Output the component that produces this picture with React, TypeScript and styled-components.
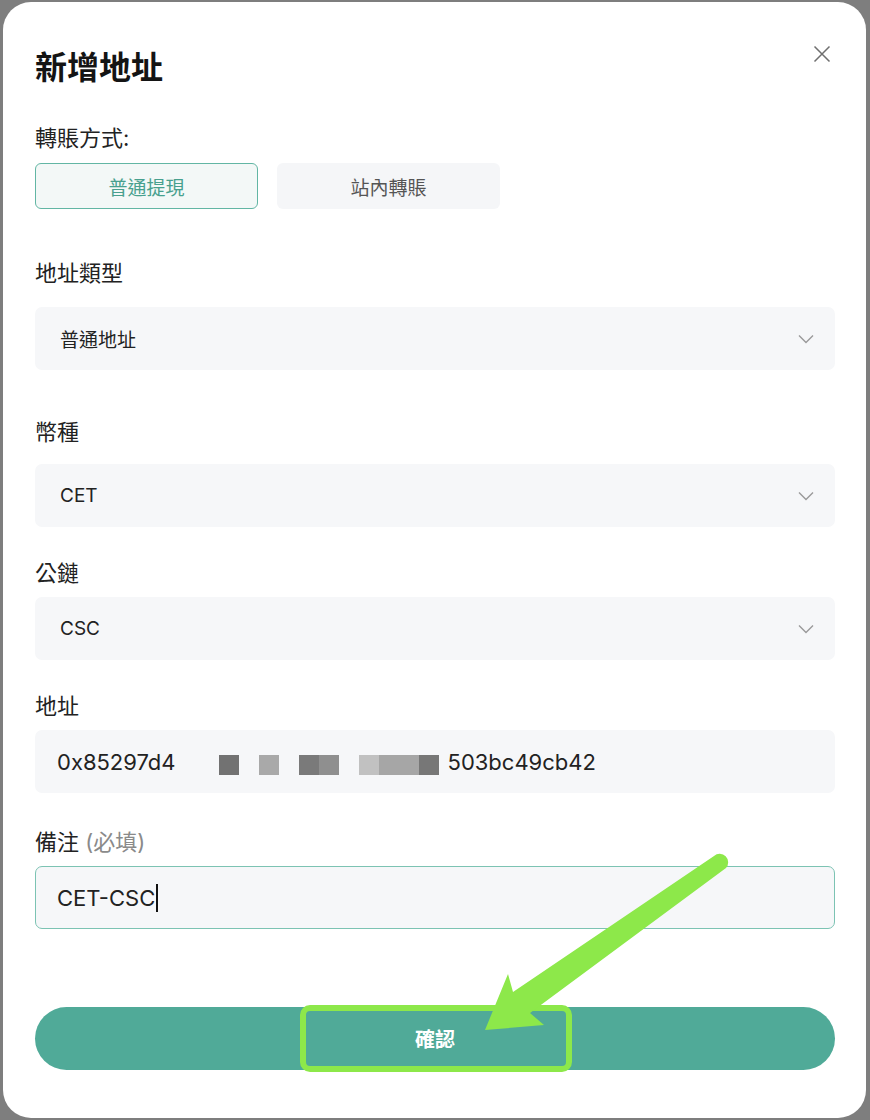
import React from 'react';
import styled, { createGlobalStyle } from 'styled-components';

const GlobalStyle = createGlobalStyle`
  html, body {
    margin: 0;
    padding: 0;
    background: #7e7e7e;
  }
  body {
    font-family: Inter, "Noto Sans CJK TC", sans-serif;
  }
`;

const Page = styled.div`
  position: relative;
  width: 870px;
  height: 1120px;
  padding: 2px 4px 2px 3px;
  box-sizing: border-box;
  background: #7e7e7e;
`;

const Modal = styled.div`
  position: relative;
  height: 100%;
  background: #fff;
  border-radius: 28px;
  padding: 46px 31px 0 32px;
  box-sizing: border-box;
  display: flex;
  flex-direction: column;
`;

const Title = styled.h1`
  margin: 0;
  font-size: 32px;
  line-height: 40px;
  font-weight: 700;
  color: #141414;
`;

const Close = styled.button`
  position: absolute;
  top: 43px;
  right: 35px;
  width: 18px;
  height: 18px;
  padding: 0;
  border: none;
  background: none;
  display: flex;
  align-items: center;
  justify-content: center;
`;

const Label = styled.div<{ $top: number; $gap: number }>`
  margin-top: ${p => p.$top}px;
  margin-bottom: ${p => p.$gap}px;
  font-size: 22px;
  line-height: 30px;
  color: #222;

  span {
    color: #8a8a8a;
  }
`;

const Tabs = styled.div`
  display: flex;
  gap: 19px;
`;

const Tab = styled.div<{ $active?: boolean }>`
  width: 223px;
  height: 46px;
  box-sizing: border-box;
  border-radius: 6px;
  display: flex;
  align-items: center;
  justify-content: center;
  font-size: 19px;
  border: 1px solid ${p => (p.$active ? '#62b6a4' : 'transparent')};
  background: ${p => (p.$active ? '#f3f8f7' : '#f5f6f8')};
  color: ${p => (p.$active ? '#48a08e' : '#555')};
`;

const Box = styled.div<{ $focus?: boolean }>`
  height: 63px;
  box-sizing: border-box;
  border-radius: 7px;
  background: #f6f7f9;
  border: 1px solid ${p => (p.$focus ? '#7cc3b3' : 'transparent')};
  display: flex;
  align-items: center;
  color: #222;
`;

const Select = styled(Box)`
  padding: 0 20px 0 24px;
  justify-content: space-between;
  font-size: 19px;
`;

const Input = styled(Box)`
  padding-left: 21px;
  font-size: 22px;
`;

const Caret = styled.span`
  display: inline-block;
  width: 2px;
  height: 28px;
  margin-left: 1px;
  background: #111;
`;

const Redacted = styled.div`
  display: flex;
  align-items: center;
  width: 272px;
  height: 20px;
  margin-top: 7px;
`;

const Block = styled.span<{ $w: number; $c: string; $gap: number }>`
  width: ${p => p.$w}px;
  height: 20px;
  margin-left: ${p => p.$gap}px;
  background: ${p => p.$c};
`;

const Confirm = styled.button`
  margin-top: 78px;
  height: 63px;
  border: none;
  border-radius: 32px;
  background: #50aa98;
  color: #fff;
  font-family: inherit;
  font-size: 20px;
  font-weight: 700;
`;

const Overlay = styled.svg`
  position: absolute;
  top: 0;
  left: 0;
  pointer-events: none;
`;

const blocks = [
  { w: 20, c: '#727272', gap: 43 },
  { w: 20, c: '#a9a9a9', gap: 20 },
  { w: 20, c: '#7a7a7a', gap: 20 },
  { w: 20, c: '#8f8f8f', gap: 0 },
  { w: 20, c: '#c1c1c1', gap: 20 },
  { w: 40, c: '#a6a6a6', gap: 0 },
  { w: 20, c: '#777777', gap: 0 },
];

const Chevron = () => (
  <svg width="16" height="10" viewBox="0 0 16 10" fill="none">
    <path d="M1 1.5l7 7 7-7" stroke="#9a9a9a" strokeWidth="1.4" />
  </svg>
);

const App = () => (
  <>
    <GlobalStyle />
    <Page>
      <Modal>
        <Title>新增地址</Title>
        <Close aria-label="close">
          <svg width="18" height="18" viewBox="0 0 18 18" fill="none">
            <path d="M1.5 1.5l15 15M16.5 1.5l-15 15" stroke="#6f6f6f" strokeWidth="1.5" />
          </svg>
        </Close>

        <Label $top={35} $gap={10}>轉賬方式:</Label>
        <Tabs>
          <Tab $active>普通提現</Tab>
          <Tab>站內轉賬</Tab>
        </Tabs>

        <Label $top={49} $gap={19}>地址類型</Label>
        <Select>普通地址<Chevron /></Select>

        <Label $top={47} $gap={17}>幣種</Label>
        <Select>CET<Chevron /></Select>

        <Label $top={31} $gap={9}>公鏈</Label>
        <Select>CSC<Chevron /></Select>

        <Label $top={31} $gap={9}>地址</Label>
        <Input>
          0x85297d4
          <Redacted>
            {blocks.map((b, i) => (
              <Block key={i} $w={b.w} $c={b.c} $gap={b.gap} />
            ))}
          </Redacted>
          503bc49cb42
        </Input>

        <Label $top={34} $gap={9}>備注 <span>(必填)</span></Label>
        <Input $focus>CET-CSC<Caret /></Input>

        <Confirm>確認</Confirm>
      </Modal>

      <Overlay width="870" height="1120" viewBox="0 0 870 1120">
        <rect x="303" y="1008" width="266" height="61" rx="7" fill="none" stroke="#8de84a" strokeWidth="6" />
        <path
          d="M714 856 L513 992 L508 974 L485 1030 L544 1025 L530 1013 L726 868 A8.5 8.5 0 0 0 714 856 Z"
          fill="#8de84a"
        />
      </Overlay>
    </Page>
  </>
);

export default App;
